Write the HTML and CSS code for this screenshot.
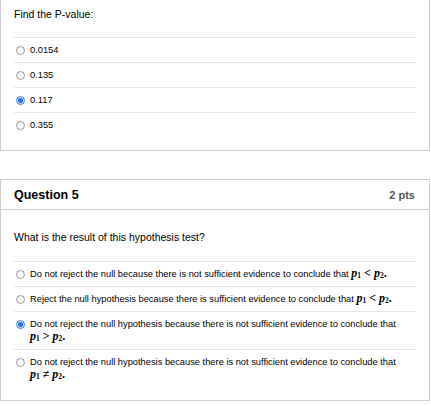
FILE: index.html
```html
<!DOCTYPE html>
<html>
<head>
<meta charset="utf-8">
<link rel="stylesheet" href="styles.css">
</head>
<body>
<div class="card card--cut">
  <div class="qtext">Find the P-value:</div>
  <div class="answers">
    <div class="answer"><span class="radio"></span><span class="label">0.0154</span></div>
    <div class="answer"><span class="radio"></span><span class="label">0.135</span></div>
    <div class="answer"><span class="radio radio--on"></span><span class="label">0.117</span></div>
    <div class="answer"><span class="radio"></span><span class="label">0.355</span></div>
  </div>
</div>

<div class="card">
  <div class="card-header">
    <span class="title">Question 5</span>
    <span class="pts">2 pts</span>
  </div>
  <div class="qtext">What is the result of this hypothesis test?</div>
  <div class="answers">
    <div class="answer"><span class="radio"></span><span class="label">Do not reject the null because there is not sufficient evidence to conclude that <span class="math"><i>p</i><sub>1</sub> &lt; <i>p</i><sub>2</sub>.</span></span></div>
    <div class="answer"><span class="radio"></span><span class="label">Reject the null hypothesis because there is sufficient evidence to conclude that <span class="math"><i>p</i><sub>1</sub> &lt; <i>p</i><sub>2</sub>.</span></span></div>
    <div class="answer"><span class="radio radio--on"></span><span class="label">Do not reject the null hypothesis because there is not sufficient evidence to conclude that <span class="math"><i>p</i><sub>1</sub> &gt; <i>p</i><sub>2</sub>.</span></span></div>
    <div class="answer"><span class="radio"></span><span class="label">Do not reject the null hypothesis because there is not sufficient evidence to conclude that <span class="math"><i>p</i><sub>1</sub> &ne; <i>p</i><sub>2</sub>.</span></span></div>
  </div>
</div>
</body>
</html>
```

FILE: styles.css
```css
html, body {
  margin: 0;
  padding: 0;
  background: #fff;
}
body {
  font-family: "Liberation Sans", Arial, sans-serif;
  font-size: 10.5px;
  color: #000;
  width: 431px;
}
.card {
  width: 430px;
  box-sizing: border-box;
  border: 1px solid #cfcfcf;
  padding: 0 13px 13px 13px;
  margin-bottom: 28px;
}
.card:last-child {
  margin-bottom: 0;
}
.card--cut {
  border-top: none;
}
.card-header {
  display: flex;
  justify-content: space-between;
  align-items: center;
  height: 29px;
  margin: 0 -13px;
  padding: 0 14px 0 13px;
  border-bottom: 1px solid #cfcfcf;
}
.title {
  font-weight: bold;
  font-size: 12.5px;
}
.pts {
  font-weight: bold;
  font-size: 11px;
  color: #555;
}
.qtext {
  line-height: 13px;
  padding: 21px 0 17px 0;
}
.card--cut .qtext {
  padding-top: 8px;
  padding-bottom: 16px;
}
.answer {
  display: flex;
  align-items: flex-start;
  border-top: 1px solid #e6e6e6;
  padding: 6px 0 5px 0;
  line-height: 13px;
  font-size: 9.3px;
}
.radio {
  flex: none;
  box-sizing: border-box;
  width: 9px;
  height: 9px;
  margin: 2px 5px 0 2px;
  border-radius: 50%;
  border: 1px solid #9a9a9a;
  background: linear-gradient(#f4f4f4, #ffffff);
}
.radio--on {
  border: 1px solid #3a7fe6;
  background: radial-gradient(circle, #2f78ea 0 2.2px, #d6e5fc 2.8px);
}
.label {
  flex: 1;
}
.math {
  font-family: "Liberation Serif", "Times New Roman", serif;
  font-weight: bold;
  font-size: 12px;
  line-height: 0;
  white-space: nowrap;
}
.math sub {
  font-size: 7.5px;
  vertical-align: -1px;
  line-height: 0;
}
```
